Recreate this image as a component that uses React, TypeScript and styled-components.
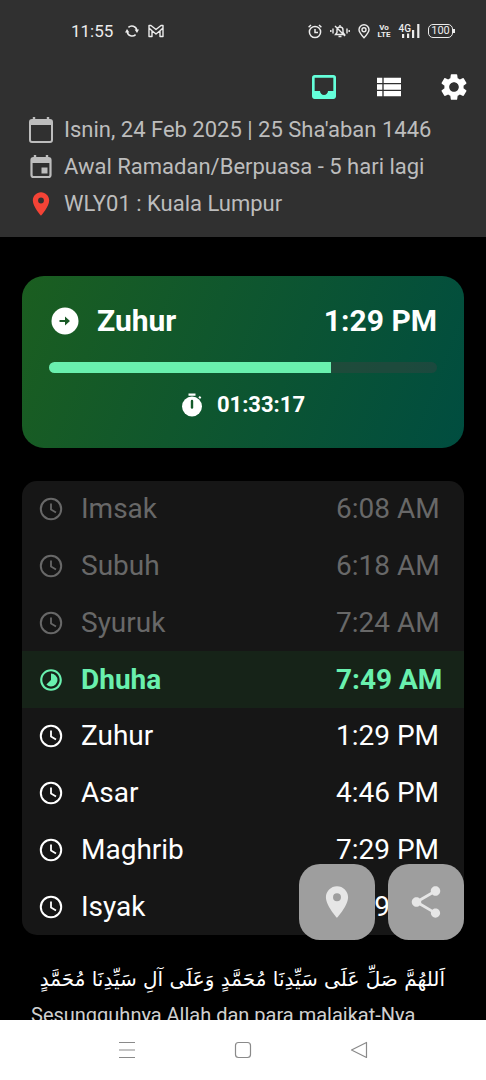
import React from "react";
import styled, { createGlobalStyle, css } from "styled-components";
import {
  MdInbox,
  MdSettings,
  MdLocationOn,
  MdShare,
  MdTimelapse,
} from "react-icons/md";

const GlobalStyle = createGlobalStyle`
  * { box-sizing: border-box; }
  body { margin: 0; background: #000; font-family: Roboto, "Liberation Sans", sans-serif; }
  button { border: 0; padding: 0; margin: 0; background: none; font: inherit; color: inherit; cursor: pointer; }
`;

const Screen = styled.div`
  position: relative;
  display: flex;
  flex-direction: column;
  height: 100vh;
  background: #000;
  overflow: hidden;
`;

const Header = styled.header`
  flex: none;
  background: #303030;
  color: #bdbdbd;
  padding-bottom: 15px;
`;

const StatusBar = styled.div`
  display: flex;
  justify-content: space-between;
  align-items: center;
  height: 62px;
  padding: 0 33px 0 71px;
  color: #ececec;
`;

const StatusGroup = styled.div<{ $gap: number }>`
  display: flex;
  align-items: center;
  gap: ${(p) => p.$gap}px;
`;

const Clock = styled.span`
  font-size: 17px;
  line-height: 20px;
`;

const Toolbar = styled.nav`
  display: flex;
  justify-content: flex-end;
  gap: 33px;
  height: 49px;
  padding: 0 16px;
  align-items: center;
`;

const ToolButton = styled.button<{ $active?: boolean }>`
  display: flex;
  width: 32px;
  height: 32px;
  color: ${(p) => (p.$active ? "#64ffda" : "#fff")};
`;

const InfoLine = styled.div`
  display: flex;
  align-items: center;
  gap: 8px;
  height: 37px;
  padding-left: 26px;
  font-size: 22px;
  line-height: 36px;
  white-space: nowrap;
`;

const InfoIcon = styled.span<{ $color?: string }>`
  display: flex;
  justify-content: center;
  flex: none;
  width: 30px;
  color: ${(p) => p.$color || "inherit"};
`;

const Content = styled.main`
  flex: 1;
  min-height: 0;
  overflow: hidden;
  padding: 39px 22px 0;
`;

const NextCard = styled.section`
  padding: 25px 27px 0;
  height: 172px;
  border-radius: 22px;
  background: linear-gradient(111deg, #1b5e20, #004d40);
  color: #fff;
`;

const NextRow = styled.div`
  display: flex;
  align-items: center;
  height: 40px;
  font-size: 30px;
  line-height: 40px;
  font-weight: 700;
`;

const NextName = styled.span`
  flex: 1;
  margin-left: 17px;
`;

const Track = styled.div`
  height: 11px;
  margin-top: 21px;
  border-radius: 6px;
  overflow: hidden;
  background: rgba(66, 66, 66, 0.4);
`;

const Fill = styled.div`
  height: 100%;
  background: #69f0ae;
`;

const Countdown = styled.div`
  display: flex;
  justify-content: center;
  align-items: center;
  gap: 14px;
  margin-top: 18px;
  font-size: 22px;
  line-height: 28px;
  font-weight: 700;
`;

const Times = styled.ul`
  display: grid;
  grid-auto-rows: 1fr;
  min-height: 454px;
  margin: 33px 0 0;
  padding: 0;
  list-style: none;
  border-radius: 15px;
  overflow: hidden;
  background: #161616;
`;

type Phase = "past" | "current" | "next";

const phaseStyle = {
  past: css`
    color: #686868;
  `,
  current: css`
    color: #69f0ae;
    background: #162318;
    font-weight: 700;
  `,
  next: css`
    color: #fff;
  `,
};

const TimeRow = styled.li<{ $phase: Phase }>`
  display: grid;
  grid-template-columns: 26px 1fr 112px;
  column-gap: 17px;
  align-items: center;
  padding: 0 16px;
  font-size: 28px;
  line-height: 36px;
  white-space: nowrap;
  ${(p) => phaseStyle[p.$phase]}
`;

const Verse = styled.p`
  margin: 26px 0 0;
  padding: 0 19px;
  direction: rtl;
  font-family: "DejaVu Sans", sans-serif;
  font-size: 20px;
  line-height: 36px;
  color: #fff;
  white-space: nowrap;
`;

const Translation = styled.p`
  margin: 6px 9px 0;
  font-size: 20px;
  line-height: 24px;
  color: #d0d0d0;
`;

const Actions = styled.div`
  position: absolute;
  right: 22px;
  bottom: 140px;
  display: flex;
  gap: 13px;
`;

const ActionButton = styled.button`
  display: flex;
  align-items: center;
  justify-content: center;
  width: 76px;
  height: 76px;
  border-radius: 21px;
  background: #9e9e9e;
  color: #e6e6e6;
`;

const SystemNav = styled.nav`
  flex: none;
  display: flex;
  justify-content: center;
  align-items: center;
  gap: 92px;
  height: 60px;
  background: #fff;
`;

const NavButton = styled.button`
  display: flex;
  width: 24px;
  height: 24px;
`;

const SyncIcon = () => (
  <svg width="14" height="14" viewBox="0 0 14 14" fill="none" stroke="currentColor" strokeWidth="1.5">
    <path d="M3.4 3.4A5 5 0 0 1 11.8 6M10.6 10.6A5 5 0 0 1 2.2 8" />
    <path d="M9.6 5.6H14L12 9zM0 8.4h4.4L2 5z" fill="currentColor" stroke="none" />
  </svg>
);

const MailIcon = () => (
  <svg width="16" height="14" viewBox="0 0 16 14" fill="none" stroke="currentColor" strokeWidth="1.4" strokeLinejoin="round">
    <path d="M1 12.5v-11h2L8 5.5l5-4h2v11h-3V6.8L8 10 4 6.8v5.7zM4 6.8 1 4M12 6.8 15 4" />
  </svg>
);

const AlarmIcon = () => (
  <svg width="14" height="15" viewBox="0 0 14 15" fill="none" stroke="currentColor" strokeWidth="1.5">
    <circle cx="7" cy="8" r="5.6" />
    <path d="M7 5v3.4h3M.6 3.2 3 1M13.4 3.2 11 1" />
  </svg>
);

const MutedBellIcon = () => (
  <svg width="20" height="14" viewBox="0 0 20 14" fill="none" stroke="currentColor" strokeWidth="1.4">
    <path d="M5.5 10.5h9L13 8.5V6a3 3 0 0 0-6 0v2.5zM8.5 12.5h3M10 1v2M5 2l10 10M3 4.5v5M17 4.5v5M.8 6v2M19.2 6v2" />
  </svg>
);

const PinOutlineIcon = () => (
  <svg width="12" height="15" viewBox="0 0 12 15" fill="none" stroke="currentColor" strokeWidth="1.4">
    <path d="M6 13.8C3 10.6 1 8.4 1 5.8a5 5 0 0 1 10 0c0 2.6-2 4.8-5 8z" />
    <circle cx="6" cy="5.8" r="2" />
  </svg>
);

const VolteMark = styled.span`
  display: flex;
  flex-direction: column;
  align-items: center;
  font-size: 8px;
  line-height: 7px;
  font-weight: 700;
`;

const Signal = styled.span`
  display: flex;
  align-items: flex-start;
  font-size: 10px;
  line-height: 9px;
  font-weight: 500;
`;

const SignalIcon = () => (
  <svg width="18" height="14" viewBox="0 0 18 14" fill="currentColor">
    <path d="M0 10h2.2v4H0zM5 9.5h2.2V14H5zM10 6h2.2v8H10zM15.2 0h2.2v14h-2.2z" />
  </svg>
);

const SignalBars = styled.span`
  display: flex;
  margin-left: -9px;
`;

const Battery = styled.span`
  position: relative;
  width: 25px;
  height: 14px;
  border: 1px solid #ececec;
  border-radius: 5px;
  font-size: 11px;
  line-height: 12px;
  text-align: center;
  &::after {
    content: "";
    position: absolute;
    right: -3px;
    top: 4px;
    width: 2px;
    height: 4px;
    background: #ececec;
  }
`;

const ListIcon = () => (
  <svg width="32" height="32" viewBox="0 0 24 24" fill="currentColor">
    <path d="M3 14h4v-4H3zM3 19h4v-4H3zM3 9h4V5H3zM8 14h13v-4H8zM8 19h13v-4H8zM8 5v4h13V5z" />
  </svg>
);

const CalendarIcon = () => (
  <svg width="26" height="28" viewBox="0 0 26 28" fill="none" stroke="currentColor" strokeWidth="2">
    <rect x="2" y="4" width="22" height="22" rx="2" />
    <path d="M2 6.5h22" strokeWidth="5" />
    <path d="M6 1v4M20 1v4" strokeWidth="2.4" />
  </svg>
);

const EventIcon = () => (
  <svg width="24" height="26" viewBox="0 0 24 26" fill="none" stroke="currentColor" strokeWidth="2.2">
    <rect x="2.5" y="4" width="19" height="19" rx="2" />
    <path d="M2 6.5h20" strokeWidth="5" />
    <path d="M6 1v4M18 1v4" strokeWidth="2.4" />
    <path d="M12.5 13.5h6v6h-6z" fill="currentColor" stroke="none" />
  </svg>
);

const ArrowCircleIcon = () => (
  <svg width="31" height="28" viewBox="0 0 31 28">
    <circle cx="16" cy="14" r="13.5" fill="#fff" />
    <path d="M10.5 13h5.5V9.6l5 4.4-5 4.4V15h-5.5z" fill="#1a5a27" />
  </svg>
);

const StopwatchIcon = () => (
  <svg width="22" height="26" viewBox="0 0 22 26">
    <path d="M7.5 1.6h7v2.2h-7zM17.3 5.2l1.6-1.2 1.4 1.6-1.3 1.5z" fill="#fff" />
    <circle cx="11" cy="14.5" r="10" fill="#fff" />
    <path d="M11 9v6.5" stroke="#145a2a" strokeWidth="2.4" strokeLinecap="round" />
  </svg>
);

const ClockIcon = () => (
  <svg width="26" height="26" viewBox="0 0 26 26" fill="none" stroke="currentColor" strokeWidth="2">
    <circle cx="13" cy="13" r="10.2" />
    <path d="M13 7.5v6l5 3" strokeWidth="1.8" />
  </svg>
);

const MenuIcon = () => (
  <svg width="24" height="24" viewBox="0 0 24 24" stroke="#8a8a8a" strokeWidth="1.2">
    <path d="M4 4.5h16M4 12h16M4 19.5h16" />
  </svg>
);

const HomeIcon = () => (
  <svg width="24" height="24" viewBox="0 0 24 24" fill="none" stroke="#8a8a8a" strokeWidth="1.2">
    <rect x="4.5" y="4.5" width="15" height="15" rx="3" />
  </svg>
);

const BackIcon = () => (
  <svg width="24" height="24" viewBox="0 0 24 24" fill="none" stroke="#8a8a8a" strokeWidth="1.2" strokeLinejoin="round">
    <path d="M19.5 4.5v15L4.5 12z" />
  </svg>
);

const prayers: { name: string; time: string; phase: Phase }[] = [
  { name: "Imsak", time: "6:08 AM", phase: "past" },
  { name: "Subuh", time: "6:18 AM", phase: "past" },
  { name: "Syuruk", time: "7:24 AM", phase: "past" },
  { name: "Dhuha", time: "7:49 AM", phase: "current" },
  { name: "Zuhur", time: "1:29 PM", phase: "next" },
  { name: "Asar", time: "4:46 PM", phase: "next" },
  { name: "Maghrib", time: "7:29 PM", phase: "next" },
  { name: "Isyak", time: "8:39 PM", phase: "next" },
];

export default function App() {
  const progress = 72.7;
  return (
    <Screen>
      <GlobalStyle />
      <Header>
        <StatusBar>
          <StatusGroup $gap={12}>
            <Clock>11:55</Clock>
            <StatusGroup $gap={9}>
              <SyncIcon />
              <MailIcon />
            </StatusGroup>
          </StatusGroup>
          <StatusGroup $gap={8}>
            <AlarmIcon />
            <MutedBellIcon />
            <PinOutlineIcon />
            <VolteMark>
              <span>Vo</span>
              <span>LTE</span>
            </VolteMark>
            <Signal>
              4G
              <SignalBars>
                <SignalIcon />
              </SignalBars>
            </Signal>
            <Battery>100</Battery>
          </StatusGroup>
        </StatusBar>
        <Toolbar>
          <ToolButton $active aria-label="Today">
            <MdInbox size={32} />
          </ToolButton>
          <ToolButton aria-label="List">
            <ListIcon />
          </ToolButton>
          <ToolButton aria-label="Settings">
            <MdSettings size={32} />
          </ToolButton>
        </Toolbar>
        <InfoLine>
          <InfoIcon>
            <CalendarIcon />
          </InfoIcon>
          Isnin, 24 Feb 2025 | 25 Sha'aban 1446
        </InfoLine>
        <InfoLine>
          <InfoIcon>
            <EventIcon />
          </InfoIcon>
          Awal Ramadan/Berpuasa - 5 hari lagi
        </InfoLine>
        <InfoLine>
          <InfoIcon $color="#f44336">
            <MdLocationOn size={28} />
          </InfoIcon>
          WLY01 : Kuala Lumpur
        </InfoLine>
      </Header>
      <Content>
        <NextCard>
          <NextRow>
            <ArrowCircleIcon />
            <NextName>Zuhur</NextName>
            <span>1:29 PM</span>
          </NextRow>
          <Track role="progressbar" aria-label="Time until Zuhur" aria-valuenow={progress}>
            <Fill style={{ width: `${progress}%` }} />
          </Track>
          <Countdown>
            <StopwatchIcon />
            <span>01:33:17</span>
          </Countdown>
        </NextCard>
        <Times>
          {prayers.map((p) => (
            <TimeRow key={p.name} $phase={p.phase}>
              {p.phase === "current" ? <MdTimelapse size={26} /> : <ClockIcon />}
              <span>{p.name}</span>
              <span>{p.time}</span>
            </TimeRow>
          ))}
        </Times>
        <Verse lang="ar">اَللهُمَّ صَلِّ عَلَى سَيِّدِنَا مُحَمَّدٍ وَعَلَى آلِ سَيِّدِنَا مُحَمَّدٍ</Verse>
        <Translation>Sesungguhnya Allah dan para malaikat-Nya</Translation>
      </Content>
      <Actions>
        <ActionButton aria-label="Location">
          <MdLocationOn size={38} />
        </ActionButton>
        <ActionButton aria-label="Share">
          <MdShare size={38} />
        </ActionButton>
      </Actions>
      <SystemNav>
        <NavButton aria-label="Recent apps">
          <MenuIcon />
        </NavButton>
        <NavButton aria-label="Home">
          <HomeIcon />
        </NavButton>
        <NavButton aria-label="Back">
          <BackIcon />
        </NavButton>
      </SystemNav>
    </Screen>
  );
}
